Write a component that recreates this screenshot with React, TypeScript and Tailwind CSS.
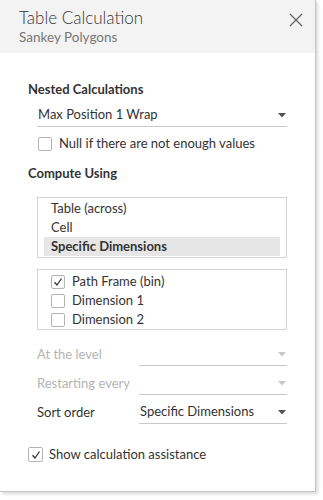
function Check({ checked, className = '' }: { checked?: boolean; className?: string }) {
  return (
    <span
      className={`flex h-[14px] w-[14px] shrink-0 items-center justify-center rounded-[2px] border border-[#b4b4b4] bg-white ${className}`}
    >
      {checked && (
        <svg width="10" height="10" viewBox="0 0 10 10">
          <path d="M1.5 5.2 L4 8 L8.5 1.5" fill="none" stroke="#333" strokeWidth="1.3" />
        </svg>
      )}
    </span>
  );
}

function Caret({ muted }: { muted?: boolean }) {
  return (
    <svg width="8" height="5" viewBox="0 0 8 5">
      <path d="M0 0 H8 L4 4.5 Z" fill={muted ? '#c8c8c8' : '#555'} />
    </svg>
  );
}

function Select({ value, muted }: { value?: string; muted?: boolean }) {
  return (
    <div className="flex h-[23px] flex-1 items-center justify-between border-b border-[#c8c8c8] pl-[1px] pr-[1px]">
      <span className="text-[13px] text-[#333]">{value}</span>
      <Caret muted={muted} />
    </div>
  );
}

export default function App() {
  const font = { fontFamily: '"Lato", "Liberation Sans", sans-serif' };
  return (
    <div className="h-[500px] w-[323px] bg-white" style={font}>
      <div className="h-[492px] w-[316px] border-r border-b border-[#c6c6c6] bg-white shadow-[2px_2px_3px_rgba(0,0,0,0.15)]">
        <div className="flex h-[53px] items-start justify-between bg-[#f3f3f3] pl-[19px] pr-[12px] pt-[7px]">
          <div>
            <div className="text-[17px] font-light leading-[22px] text-[#333]">Table Calculation</div>
            <div className="text-[13.5px] leading-[17px] text-[#777]">Sankey Polygons</div>
          </div>
          <svg width="14" height="14" viewBox="0 0 14 14" className="mt-[6px]">
            <path d="M1 1 L13 13 M13 1 L1 13" stroke="#666" strokeWidth="1.3" />
          </svg>
        </div>

        <div className="pl-[28px] pr-[28px] pt-[28px]">
          <div className="text-[13px] font-bold leading-[17px] text-[#333]">Nested Calculations</div>
          <div className="ml-[9px] mt-[6px] flex">
            <Select value="Max Position 1 Wrap" />
          </div>
          <div className="ml-[10px] mt-[8px] flex h-[17px] items-center gap-[7px]">
            <Check />
            <span className="text-[13px] leading-[17px] text-[#333]">Null if there are not enough values</span>
          </div>

          <div className="mt-[13px] text-[13px] font-bold leading-[17px] text-[#333]">Compute Using</div>

          <div className="ml-[9px] mt-[15px] border border-[#d4d4d4] px-[6px] py-[1px]">
            {['Table (across)', 'Cell', 'Specific Dimensions'].map((t, i) => (
              <div
                key={t}
                className={`h-[19px] pl-[7px] text-[13px] leading-[19px] text-[#333] ${
                  i === 2 ? 'bg-[#e6e6e6] font-bold' : ''
                }`}
              >
                {t}
              </div>
            ))}
          </div>

          <div className="ml-[9px] mt-[11px] border border-[#d4d4d4] pl-[13px] pt-[2px]">
            {[
              ['Path Frame (bin)', true],
              ['Dimension 1', false],
              ['Dimension 2', false],
            ].map(([t, c]) => (
              <div key={t as string} className="flex h-[19px] items-center gap-[7px]">
                <Check checked={c as boolean} />
                <span className="text-[13px] text-[#333]">{t as string}</span>
              </div>
            ))}
          </div>

          <div className="ml-[9px] mt-[13px] flex flex-col gap-[6px]">
            <div className="flex items-center">
              <span className="w-[102px] text-[13px] text-[#b4b4b4]">At the level</span>
              <Select muted />
            </div>
            <div className="flex items-center">
              <span className="w-[102px] text-[13px] text-[#b4b4b4]">Restarting every</span>
              <Select muted />
            </div>
            <div className="flex items-center">
              <span className="w-[102px] text-[13px] text-[#333]">Sort order</span>
              <Select value="Specific Dimensions" />
            </div>
          </div>

          <div className="mt-[21px] flex items-center gap-[6px]">
            <Check checked className="h-[15px] w-[15px]" />
            <span className="text-[13px] text-[#333]">Show calculation assistance</span>
          </div>
        </div>
      </div>
    </div>
  );
}
